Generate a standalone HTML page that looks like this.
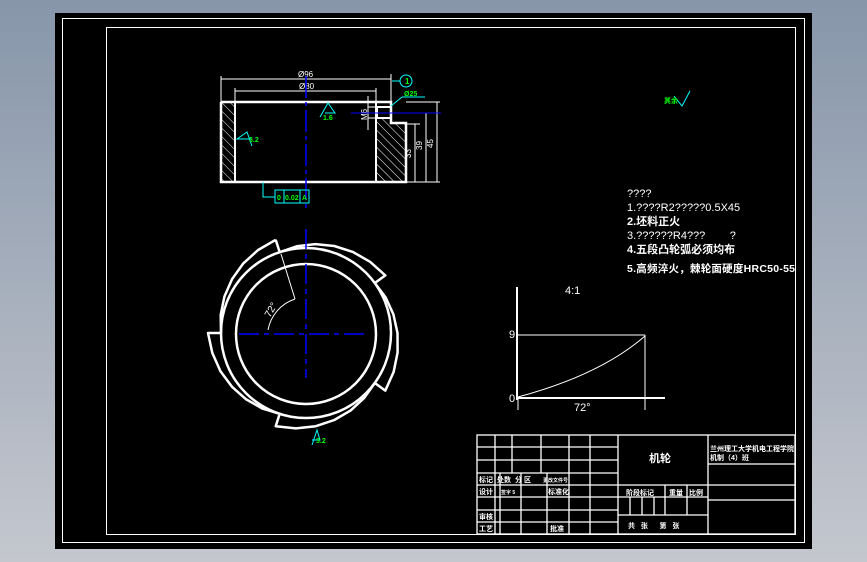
<!DOCTYPE html>
<html><head><meta charset="utf-8"><style>
html,body{margin:0;padding:0}
body{width:867px;height:562px;overflow:hidden;background:linear-gradient(#8796aa,#c4c7ce);font-family:"Liberation Sans","Noto Sans CJK SC",sans-serif}
svg{position:absolute;left:0;top:0}
</style></head><body>
<svg width="867" height="562" viewBox="0 0 867 562">
<defs>
<pattern id="h" width="6" height="6" patternUnits="userSpaceOnUse" patternTransform="rotate(-45)"><line x1="0" y1="0" x2="0" y2="6" stroke="#fff" stroke-width="1"/></pattern>
</defs>
<rect x="55" y="13" width="757" height="536" fill="#000"/>
<rect x="62.5" y="18.5" width="742" height="524" fill="none" stroke="#fff" stroke-width="1"/>
<rect x="106.5" y="27.5" width="689" height="507" fill="none" stroke="#fff" stroke-width="1"/>

<!-- part section -->
<rect x="222" y="103" width="13" height="78" fill="url(#h)"/>
<polygon points="377,118 391,118 391,123 405,123 405,181 377,181" fill="url(#h)"/>
<polyline points="221,102 391,102 391,123 406,123 406,182 221,182 221,102" fill="none" stroke="#fff" stroke-width="2.5"/>
<line x1="235" y1="102" x2="235" y2="182" stroke="#fff" stroke-width="2"/>
<line x1="376" y1="102" x2="376" y2="182" stroke="#fff" stroke-width="2"/>
<rect x="377" y="107" width="14" height="11" fill="none" stroke="#fff" stroke-width="2"/>
<g stroke="#fff" stroke-width="1" fill="none">
<line x1="221" y1="79" x2="391" y2="79"/><line x1="221" y1="76" x2="221" y2="102"/><line x1="391" y1="74" x2="391" y2="102"/>
<line x1="235" y1="91" x2="376" y2="91"/><line x1="235" y1="88" x2="235" y2="102"/><line x1="376" y1="88" x2="376" y2="102"/>
<line x1="406" y1="102" x2="440" y2="102"/><line x1="406" y1="124" x2="420" y2="124"/><line x1="406" y1="182" x2="440" y2="182"/>
<line x1="437" y1="102" x2="437" y2="182"/><line x1="426" y1="113" x2="426" y2="182"/><line x1="415" y1="124" x2="415" y2="182"/>
<line x1="368" y1="96" x2="368" y2="130"/><line x1="368" y1="107" x2="377" y2="107"/><line x1="368" y1="118" x2="377" y2="118"/>
</g>
<g fill="#fff" font-size="8">
<text x="298" y="77">Ø96</text><text x="299" y="89">Ø80</text>
<text transform="translate(433,148) rotate(-90)">45</text>
<text transform="translate(422,150) rotate(-90)">39</text>
<text transform="translate(411,158) rotate(-90)">33</text>
<text transform="translate(367,120) rotate(-90)">M6</text>
</g>
<line x1="351" y1="113" x2="441" y2="113" stroke="#00f" stroke-width="1"/>
<line x1="306" y1="76" x2="306" y2="210" stroke="#00f" stroke-width="1.5" stroke-dasharray="22,4,4,4"/>
<g stroke="#0ff" stroke-width="1" fill="none">
<circle cx="406" cy="81" r="6"/><line x1="392" y1="81" x2="400" y2="81"/>
<polyline points="391,106 402,97 425,97"/>
<polyline points="320,117 328,103 335,113 325,113"/>
<polyline points="251,139 237,139 247,132 252,146"/>
<polyline points="263,182 263,197 275,197"/>
<rect x="275" y="190" width="34" height="13"/><line x1="284" y1="190" x2="284" y2="203"/><line x1="300" y1="190" x2="300" y2="203"/>
<polyline points="690,91 682,106 674,96"/>
<polyline points="312,445 317,430 320,440 312,440"/>
</g>
<g fill="#0f0" font-size="7" font-weight="bold">
<text x="404" y="96">Ø25</text><text x="323" y="120">1.6</text><text x="249" y="142">3.2</text>
<text x="277" y="200">0</text><text x="285" y="200">0.02</text><text x="302" y="200">A</text>
<text x="664" y="103">其余</text><text x="316" y="443">3.2</text>
</g>
<text x="405" y="84" fill="#0f0" font-size="8" font-weight="bold">1</text>

<!-- cam view -->
<g stroke="#fff" stroke-width="2.5" fill="none" stroke-linejoin="round">
<circle cx="306" cy="334" r="70"/>
<circle cx="306" cy="333" r="85"/>
<polyline points="275.7,239.8 258.1,250 243.3,263.4 232,279.2 224.4,296.6 220.7,314.9 221,333 208,333 212.3,352.9 220.4,371.1 232,386.8 246.2,399.4 262.4,408.5 279.7,413.8 275.7,426.2 295.9,428.4 315.8,426.2 334.3,420 350.7,410.4 364.3,397.8 374.8,383 385.3,390.6 393.6,372 397.6,352.5 397.5,333 393.4,314.4 385.7,297.5 374.8,283 385.3,275.4 370.1,261.8 352.8,251.9 334.3,246 315.4,244.1 296.8,246.3 279.7,252.2 275.7,239.8"/>
</g>
<g stroke="#00f" stroke-width="1.5" fill="none">
<line x1="239" y1="334" x2="368" y2="334" stroke-dasharray="20,5,5,5"/>
<line x1="306" y1="229" x2="306" y2="378" stroke-dasharray="20,5,5,5"/>
</g>
<g stroke="#fff" stroke-width="1" fill="none">
<polyline points="281,254 295,299"/>
<path d="M268,330 A40,40 0 0 1 295,299"/>
</g>
<text transform="translate(270,318) rotate(-60)" fill="#fff" font-size="10">72°</text>

<!-- notes -->
<g fill="#fff" font-size="11">
<text x="627" y="197">????</text>
<text x="627" y="211">1.????R2?????0.5X45</text>
<text x="627" y="225" font-weight="bold">2.坯料正火</text>
<text x="627" y="239">3.??????R4???&#160;&#160;&#160;&#160;&#160;&#160;&#160;&#160;?</text>
<text x="627" y="253" font-weight="bold">4.五段凸轮弧必须均布</text>
<text x="627" y="272" font-weight="bold" font-size="10.5" textLength="168">5.高频淬火，棘轮面硬度HRC50-55</text>
</g>

<!-- graph -->
<g stroke="#fff" fill="none">
<line x1="517" y1="287" x2="517" y2="400" stroke-width="2"/>
<line x1="517" y1="398" x2="665" y2="398" stroke-width="2"/>
<line x1="518" y1="335" x2="645" y2="335" stroke-width="1"/>
<line x1="645" y1="335" x2="645" y2="410" stroke-width="1"/>
<line x1="518" y1="398" x2="518" y2="410" stroke-width="1"/>
<path d="M518,397 Q600,375 645,336" stroke-width="1"/>
</g>
<g fill="#fff" font-size="11"><text x="565" y="294">4:1</text><text x="509" y="338">9</text><text x="509" y="402">0</text><text x="574" y="411">72°</text></g>

<!-- title block -->
<g stroke="#fff" stroke-width="1.3" fill="none">
<rect x="477" y="435" width="318" height="99"/>
<line x1="477" y1="447" x2="618" y2="447"/><line x1="477" y1="460" x2="618" y2="460"/>
<line x1="477" y1="473" x2="618" y2="473"/><line x1="477" y1="485" x2="795" y2="485"/>
<line x1="477" y1="497" x2="618" y2="497"/><line x1="477" y1="510" x2="618" y2="510"/>
<line x1="477" y1="522" x2="618" y2="522"/>
<line x1="708" y1="464" x2="795" y2="464"/><line x1="708" y1="500" x2="795" y2="500"/>
<line x1="618" y1="497" x2="708" y2="497"/><line x1="618" y1="515" x2="708" y2="515"/>
<line x1="495" y1="435" x2="495" y2="534"/><line x1="512" y1="435" x2="512" y2="473"/>
<line x1="500" y1="473" x2="500" y2="534"/>
<line x1="541" y1="435" x2="541" y2="473"/><line x1="521" y1="473" x2="521" y2="534"/>
<line x1="569" y1="435" x2="569" y2="534"/><line x1="547" y1="473" x2="547" y2="534"/>
<line x1="590" y1="435" x2="590" y2="534"/><line x1="618" y1="435" x2="618" y2="534"/>
<line x1="708" y1="435" x2="708" y2="534"/>
<line x1="665" y1="485" x2="665" y2="515"/><line x1="687" y1="485" x2="687" y2="515"/>
<line x1="630" y1="497" x2="630" y2="515"/><line x1="642" y1="497" x2="642" y2="515"/><line x1="654" y1="497" x2="654" y2="515"/>
</g>
<g fill="#fff" font-size="7" font-weight="bold">
<text x="649" y="462" font-size="11">机轮</text>
<text x="710" y="451">兰州理工大学机电工程学院</text><text x="710" y="460">机制（4）班</text>
<text x="479" y="482">标记</text><text x="497" y="482">处数</text><text x="515" y="482">分 区</text><text x="543" y="482" font-size="5">更改文件号</text>
<text x="479" y="494">设计</text><text x="501" y="494" font-size="5">签字 5</text><text x="548" y="494">标准化</text>
<text x="479" y="519">审核</text><text x="479" y="531">工艺</text><text x="550" y="531">批准</text>
<text x="626" y="495">阶段标记</text><text x="669" y="495">重量</text><text x="689" y="495">比例</text>
<text x="628" y="528">共&#160;&#160;&#160;张&#160;&#160;&#160;&#160;&#160;&#160;第&#160;&#160;&#160;张</text>
</g>
</svg>
</body></html>
